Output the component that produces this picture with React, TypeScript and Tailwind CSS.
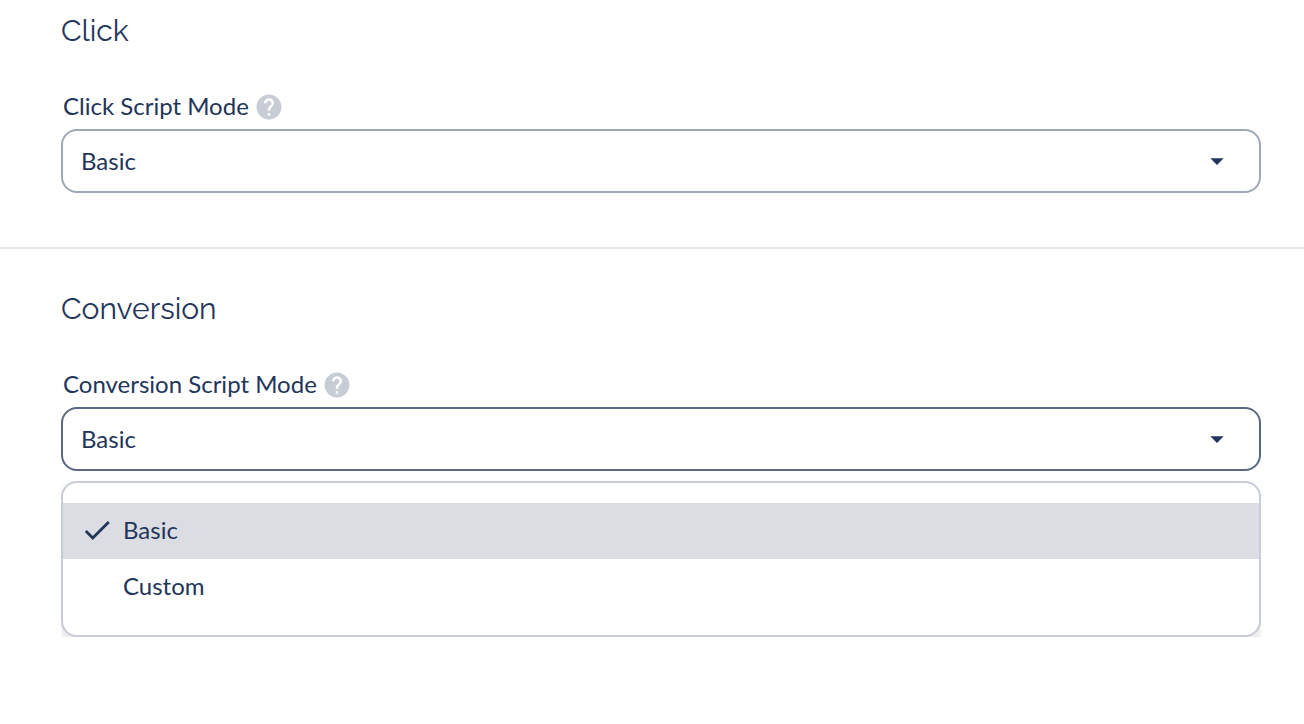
import React, { useState } from 'react';
import { MdArrowDropDown, MdCheck, MdHelp } from 'react-icons/md';

const MODES = ['Basic', 'Custom'];

interface ModeSelectProps {
  id: string;
  label: string;
  value: string;
  active?: boolean;
  onChange: (value: string) => void;
}

const ModeSelect: React.FC<ModeSelectProps> = ({ id, label, value, active, onChange }) => {
  return (
    <div>
      <div className="flex items-start gap-[5px] pl-0.5 mb-[7px]">
        <label htmlFor={id} className="text-2xl leading-7">{label}</label>
        <button type="button" aria-label={`Help: ${label}`} className="text-[#c8ccd5]">
          <MdHelp className="w-[30px] h-[30px]" />
        </button>
      </div>
      <div className="relative">
        <select
          id={id}
          value={value}
          onChange={(e) => onChange(e.target.value)}
          className={`block w-full h-16 appearance-none rounded-2xl border-2 bg-white pl-[18px] pr-16 text-2xl outline-none ${
            active ? 'border-[#5b6882]' : 'border-[#9fa8b7]'
          }`}
        >
          {MODES.map((mode) => (
            <option key={mode}>{mode}</option>
          ))}
        </select>
        <MdArrowDropDown className="pointer-events-none absolute right-7 top-4 w-8 h-8" />
      </div>
    </div>
  );
};

interface ModeMenuProps {
  value: string;
  onSelect: (value: string) => void;
}

const ModeMenu: React.FC<ModeMenuProps> = ({ value, onSelect }) => {
  return (
    <div className="mt-2.5 overflow-hidden">
      <div
        role="listbox"
        aria-label="Script mode"
        className="rounded-2xl border-2 border-[#c8ccd7] bg-white py-5 shadow-[0_8px_16px_rgba(0,0,0,0.12)]"
      >
        {MODES.map((mode) => (
          <button
            key={mode}
            type="button"
            role="option"
            aria-selected={mode === value}
            onClick={() => onSelect(mode)}
            className={`flex h-14 w-full items-center gap-2 pl-4 pb-0.5 text-left text-2xl ${
              mode === value ? 'bg-[#dcdde3]' : 'bg-white'
            }`}
          >
            <span className="flex w-9 justify-center">
              {mode === value && <MdCheck className="w-[34px] h-[34px]" />}
            </span>
            {mode}
          </button>
        ))}
      </div>
    </div>
  );
};

const SectionTitle: React.FC<{ children: React.ReactNode }> = ({ children }) => (
  <h2 className="mb-[43px] font-['Raleway','Lato',sans-serif] text-[30px] leading-9 font-normal">{children}</h2>
);

const App: React.FC = () => {
  const [clickMode, setClickMode] = useState('Basic');
  const [conversionMode, setConversionMode] = useState('Basic');

  return (
    <main className="min-h-screen bg-white font-['Lato',sans-serif] text-[#22355a]">
      <section className="border-b-2 border-[#e7e8ec] pr-[43px] pl-[61px] pt-[13px] pb-[54px]">
        <SectionTitle>Click</SectionTitle>
        <ModeSelect id="click-mode" label="Click Script Mode" value={clickMode} onChange={setClickMode} />
      </section>
      <section className="pr-[43px] pl-[61px] pt-[42px]">
        <SectionTitle>Conversion</SectionTitle>
        <ModeSelect
          id="conversion-mode"
          label="Conversion Script Mode"
          value={conversionMode}
          active
          onChange={setConversionMode}
        />
        <ModeMenu value={conversionMode} onSelect={setConversionMode} />
      </section>
    </main>
  );
};

export default App;
